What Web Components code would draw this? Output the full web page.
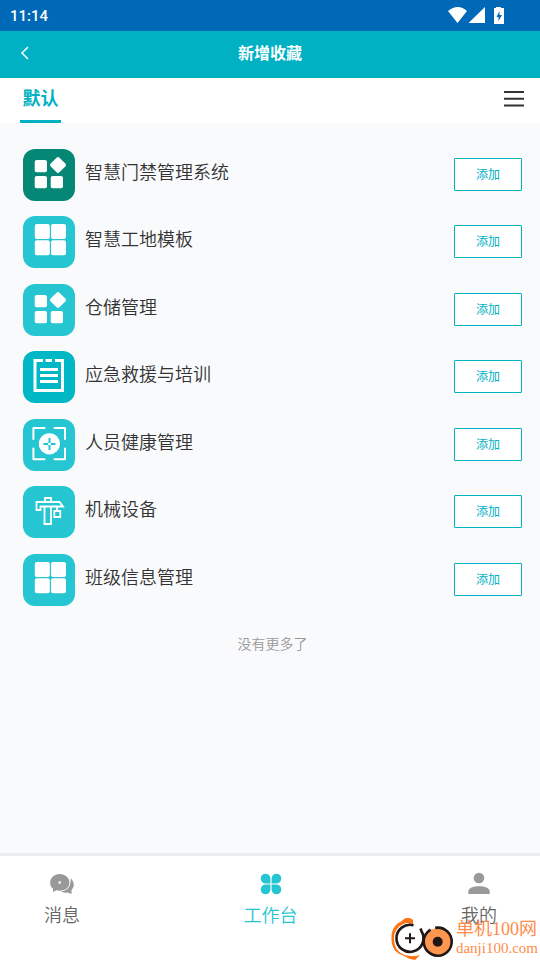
<!DOCTYPE html>
<html lang="zh-CN">
<head>
<meta charset="utf-8">
<meta name="viewport" content="width=device-width, initial-scale=1">
<title>新增收藏</title>
<style>
html, body { margin: 0; height: 100%; }
body { font-family: "Noto Sans CJK SC", sans-serif; color: #333; }
</style>
</head>
<body>
<favorites-page></favorites-page>
<script>
const define = (name, html, setup) => customElements.define(name, class extends HTMLElement {
  connectedCallback() {
    if (this.shadowRoot) return;
    const root = this.attachShadow({ mode: "open" });
    root.innerHTML = "<style>*{box-sizing:border-box}:host{box-sizing:border-box}svg{display:block}</style>" + html;
    if (setup) setup(this, root);
  }
});

const icons = {
  apps: '<g fill="#fff"><rect x="11.7" y="11" width="12.3" height="12.3" rx="2"/><rect x="11.7" y="27" width="12.3" height="12.3" rx="2"/><rect x="27.7" y="27" width="12.3" height="12.3" rx="2"/><rect x="28.8" y="9.8" width="12.4" height="12.4" rx="2" transform="rotate(45 35 16)"/></g>',
  tiles: '<g fill="#fff"><rect x="11.8" y="8" width="15" height="15" rx="2"/><rect x="28" y="8" width="15" height="15" rx="2"/><rect x="11.8" y="24.2" width="15" height="15" rx="2"/><rect x="28" y="24.2" width="15" height="15" rx="2"/></g>',
  list: '<path fill="none" stroke="#fff" stroke-width="3" d="M20 9.5h-8v30h27.5v-30H32M22.5 9.5h6.5M17 18.5h18M17 24.5h18M17 30.5h18"/>',
  health: '<path fill="none" stroke="#fff" stroke-width="2" stroke-linecap="round" stroke-linejoin="round" d="M21.5 9H10.400v11M31.5 9H42v11M21.5 40.2H10.400V29.5M31.5 40.2H42V29.5"/><circle cx="26.4" cy="24.8" r="10.6" fill="#fff"/><path stroke="#25c5d2" stroke-width="2" d="M20.5 25H25M28 25h4.5M26.5 19v4.5M26.5 26.5V31"/><circle cx="26.5" cy="25" r="2" fill="none" stroke="#25c5d2" stroke-width=".7"/>',
  crane: '<path fill="none" stroke="#fff" stroke-width="1.8" d="M13.5 16h23l3.5 4.500H17.5V24h-4zM21.5 20v18H28V20M22 16v-4h6v4M34 20v5M31.300 25h6v6h-6z"/>'
};

define("status-bar", `<style>
:host{display:flex;align-items:center;justify-content:space-between;height:31px;padding:0 34px 0 10px;background:#0069b7;color:#fff;font:500 15px/20px Roboto,sans-serif}
svg{width:58px;height:20px}</style>
<time>11:14</time>
<svg viewBox="0 0 58 20" fill="#fff" aria-hidden="true"><path d="M0 5q10-8 19 0L9.5 17zM37 1v16H20.500zM46 2h2V1h5v1h3v16H46z"/><path fill="#0069b7" d="M51.500 5L48.500 11h2v4l3.500-6h-2.500z"/></svg>`);

define("page-header", `<style>
:host{display:grid;grid-template-columns:48px 1fr 48px;align-items:center;height:47px;padding-bottom:4px;background:#00b1c3;color:#fff}
button{border:0;background:none;color:inherit;padding:0 0 0 20px;height:43px}
h1{margin:0;padding-bottom:2px;text-align:center;font-size:16px;line-height:24px;font-weight:700}</style>
<button aria-label="返回"><svg width="10" height="14" viewBox="0 0 10 14" fill="none" stroke="#fff" stroke-width="1.5"><path d="M8 1L2 7l6 6"/></svg></button>
<h1><slot></slot></h1>`);

define("tab-bar", `<style>
:host{display:flex;justify-content:space-between;height:45px;padding:0 15px 0 20px;background:#fff}
button{border:0;background:none;padding:0;font:inherit}
.tab{width:41px;height:45px;padding-bottom:4px;border-bottom:3px solid #00b1c3;border-radius:1px;color:#00b1c3;font-size:18px;line-height:26px;font-weight:700}
.menu{width:22px;height:42px}</style>
<button class="tab"><slot></slot></button>
<button class="menu" aria-label="菜单"><svg width="22" height="18" viewBox="0 0 22 18" stroke="#333" stroke-width="2"><path d="M1 2h20M1 8.7h20M1 15.5h20"/></svg></button>`);

define("app-tile", `<style>
:host{display:block;width:52px;height:52px;border-radius:12px;background:var(--tile,#25c5d2)}</style>
<svg width="52" height="52" viewBox="0 0 52 52" aria-hidden="true"></svg>`,
(el, root) => { root.querySelector("svg").innerHTML = icons[el.getAttribute("icon")]; });

define("app-row", `<style>
:host{display:flex;align-items:center;gap:10px;height:52px}
.name{flex:1;font-size:18px;line-height:26px;padding-bottom:8px;font-weight:350}
button{width:68px;height:33px;margin-bottom:1px;padding:0 0 2px;border:1px solid #00b1c3;border-radius:1px;background:#fff;color:#00b1c3;font:inherit;font-size:12px;line-height:18px}</style>
<slot name="icon"></slot><span class="name" id="name"><slot></slot></span><button aria-describedby="name">添加</button>`);

define("nav-item", `<style>
:host{display:block}
a{display:flex;flex-direction:column;align-items:center;gap:8px;color:inherit;text-decoration:none;font-size:18px;line-height:20px;font-weight:350}</style>
<a href="#"><slot name="icon"></slot><span><slot></slot></span></a>`);

define("site-mark", `<style>
:host{display:flex;align-items:center;gap:1px;color:#ff8b4a;font-family:"Liberation Serif","Noto Sans CJK SC",serif}
.name{font-size:18px;line-height:19px;white-space:nowrap}
.host{font-size:15px;line-height:19px}
p{margin:0}</style>
<svg width="64" height="42" viewBox="0 0 64 42" fill="none" aria-hidden="true">
<path fill="#ff7312" d="M22 2C19-1 14-1 11 3 4 6 0 12 .5 21c0 8 4 14 10.500 16l8 4 5 1 5-5c-7 2-11 1-15 0C7 35 3 29 3 20 3 12 9 6 16 5l6 1z"/>
<path fill="#fff" stroke="#211717" stroke-width="2.6" d="M22.500 7.300A13.500 13.500 0 1 0 30.500 13.300L29.500 10.500"/>
<path d="M14 20.300h10M19 15.300v10" stroke="#211717" stroke-width="2"/>
<circle cx="46.700" cy="23.700" r="13.500" fill="#ff9650"/>
<path stroke="#211717" stroke-width="2.6" d="M44.200 9.900A14 14 0 1 1 36.700 13.900L39.500 11.500"/><circle cx="46.700" cy="23.700" r="5" fill="#211717"/></svg>
<div><p class="name">单机100网</p><p class="host">danji100.com</p></div>`);

define("favorites-page", `<style>
:host{display:flex;flex-direction:column;min-height:100%;position:relative;background:#f9fafc}
main{flex:1;padding:26px 18px 26px 23px;display:flex;flex-direction:column}
.list{display:grid;row-gap:15px}
.list app-row:nth-child(even){margin-bottom:1px}
.end{margin:25px 0 0;text-align:center;font-size:14px;line-height:24px;color:#999;font-weight:350}
nav{display:flex;justify-content:space-between;height:107px;padding:16px 43px 0 44px;border-top:3px solid #ebecee;background:#fff;color:#666}
nav .active{color:#25c5d2}
site-mark{position:absolute;right:2px;bottom:0}</style>
<status-bar></status-bar>
<page-header>新增收藏</page-header>
<tab-bar>默认</tab-bar>
<main><div class="list">
<app-row><app-tile slot="icon" icon="apps" style="--tile:#048775"></app-tile>智慧门禁管理系统</app-row>
<app-row><app-tile slot="icon" icon="tiles"></app-tile>智慧工地模板</app-row>
<app-row><app-tile slot="icon" icon="apps"></app-tile>仓储管理</app-row>
<app-row><app-tile slot="icon" icon="list" style="--tile:#00b7c6"></app-tile>应急救援与培训</app-row>
<app-row><app-tile slot="icon" icon="health"></app-tile>人员健康管理</app-row>
<app-row><app-tile slot="icon" icon="crane"></app-tile>机械设备</app-row>
<app-row><app-tile slot="icon" icon="tiles"></app-tile>班级信息管理</app-row>
</div><p class="end">没有更多了</p></main>
<nav>
<nav-item><svg slot="icon" width="24" height="24" viewBox="0 0 24 24" fill="#999"><path d="M9.700 2C4.300 2 .2 5.700.2 10.500c0 2.800 1 4.800 2.800 6.300V20l3.500-1.700c7 1.700 13-2 13-7.800C19.500 5.700 15 2 9.700 2z"/><path d="M20.500 6c4 4 4.300 8.500 1 12v4l-4-1.500c-3 .5-5 0-6.500-1 6.500-.8 10.500-5 9.500-13.500z"/><circle cx="9.700" cy="10.500" r="1.300" fill="#fff"/></svg>消息</nav-item>
<nav-item class="active"><svg slot="icon" width="24" height="24" viewBox="0 0 24 24" fill="#25c5d2"><path d="M11.400 11.400H6.500A4.850 4.850 0 1 1 11.400 6.500zM12.600 11.400V6.500A4.850 4.850 0 1 1 17.500 11.400zM11.400 12.600v4.900A4.850 4.850 0 1 1 6.500 12.600zM12.600 12.600h4.900A4.850 4.850 0 1 1 12.600 17.500z"/></svg>工作台</nav-item>
<nav-item><svg slot="icon" width="24" height="24" viewBox="0 0 24 24" fill="#999"><circle cx="12" cy="6" r="5.300"/><path d="M1.300 22v-2.500c0-3.500 5-5.300 10.700-5.300s10.700 1.800 10.700 5.300V22z"/></svg>我的</nav-item>
</nav>
<site-mark></site-mark>`);
</script>
</body>
</html>
